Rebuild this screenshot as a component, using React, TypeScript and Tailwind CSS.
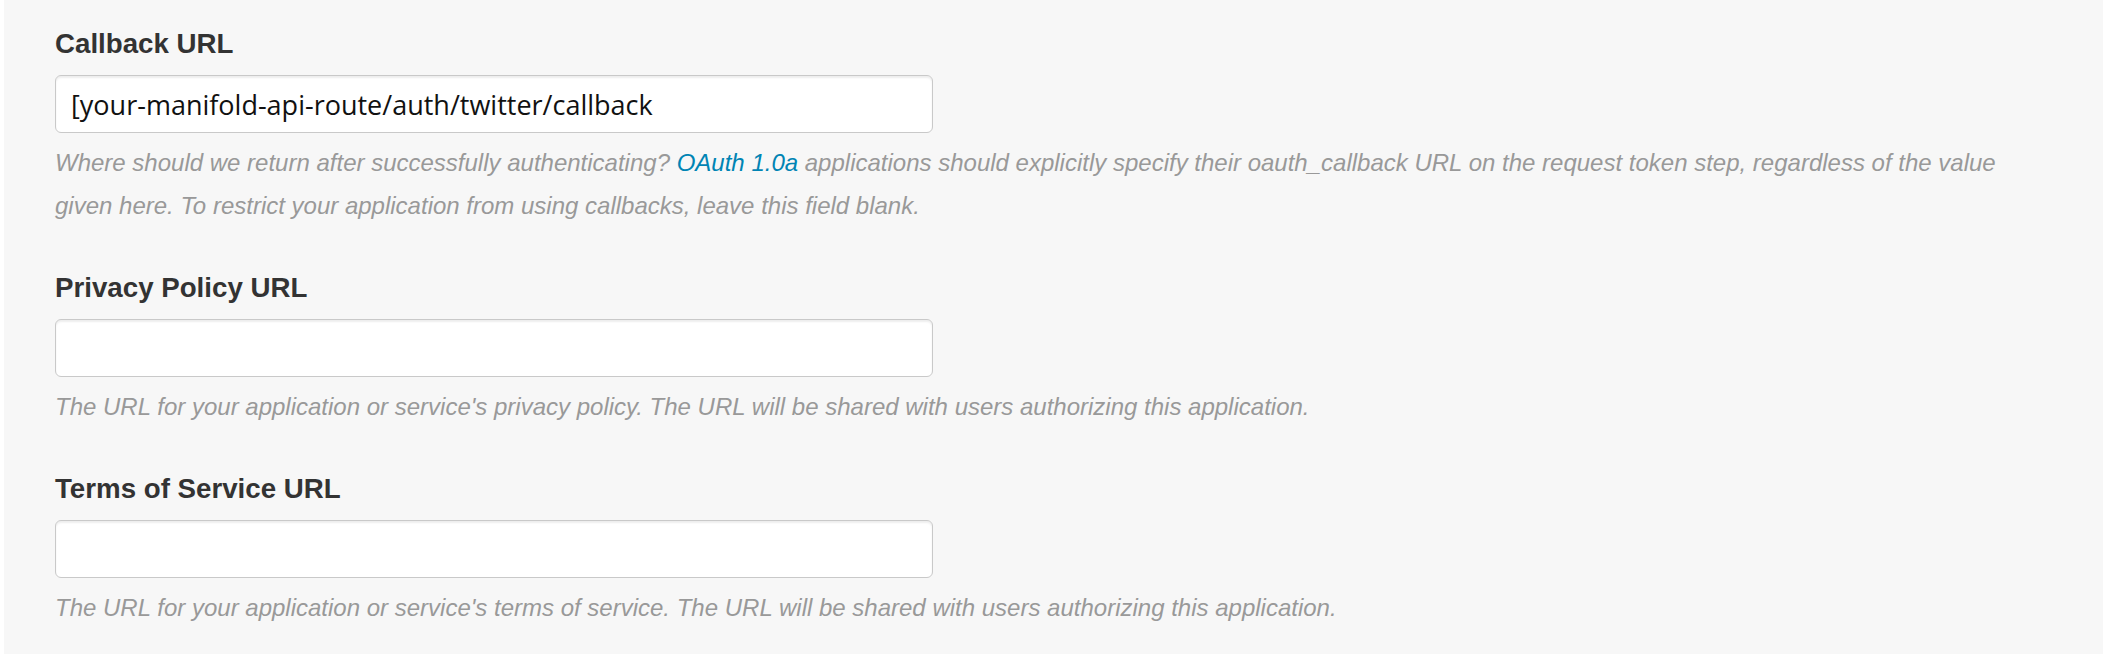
import { useState } from 'react';

const HELP = 'text-[24px] leading-[43px] italic text-[#999999] mt-[8px]';

function Field({
  label,
  value,
  children,
}: {
  label: string;
  value?: string;
  children: React.ReactNode;
}) {
  const [v, setV] = useState(value ?? '');
  return (
    <div className="mb-[45px]">
      <label className="block text-[27.7px] leading-[32px] font-bold text-[#333333] mb-[15px]">
        {label}
      </label>
      <input
        value={v}
        onChange={e => setV(e.target.value)}
        className="block w-[878px] h-[58px] rounded-[6px] border border-[#c9c9c9] bg-white pl-[15px] text-[27px] text-[#111111] outline-none shadow-[inset_0_2px_2px_rgba(0,0,0,0.07)]"
        style={{ fontFamily: '"Open Sans", sans-serif' }}
      />
      <p className={HELP}>{children}</p>
    </div>
  );
}

export default function App() {
  return (
    <div
      className="min-h-screen bg-white pl-[4px] pr-[16px]"
      style={{ fontFamily: '"Liberation Sans", Arial, sans-serif' }}
    >
      <div className="min-h-screen bg-[#f7f7f7] pl-[51px] pr-[50px] pt-[28px]">
        <Field label="Callback URL" value="[your-manifold-api-route/auth/twitter/callback">
          Where should we return after successfully authenticating?{' '}
          <a className="text-[#0084b4]">OAuth 1.0a</a> applications should explicitly specify
          their oauth_callback URL on the request token step, regardless of the value given
          here. To restrict your application from using callbacks, leave this field blank.
        </Field>
        <Field label="Privacy Policy URL">
          The URL for your application or service's privacy policy. The URL will be shared
          with users authorizing this application.
        </Field>
        <Field label="Terms of Service URL">
          The URL for your application or service's terms of service. The URL will be shared
          with users authorizing this application.
        </Field>
      </div>
    </div>
  );
}
